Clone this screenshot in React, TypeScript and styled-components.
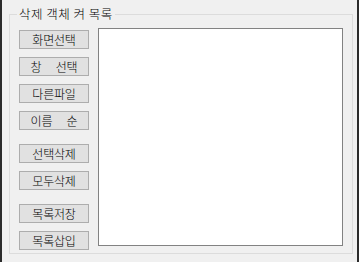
import React from "react";
import styled, { createGlobalStyle } from "styled-components";

const Global = createGlobalStyle`
  html, body { margin: 0; padding: 0; background: #f0f0f0; }
  body { font-family: "Noto Sans CJK KR", "Noto Sans", sans-serif; }
`;

const Window = styled.div`
  width: 359px;
  height: 262px;
  display: flex;
  background: #f0f0f0;
  overflow: hidden;
`;

const EdgeStrip = styled.div<{ $w: number }>`
  width: ${(p) => p.$w}px;
  background: #2b2b2b;
  flex-shrink: 0;
`;

const Content = styled.div`
  flex: 1;
  padding: 14px 0 0 7px;
`;

const GroupBox = styled.div`
  position: relative;
  width: 344px;
  height: 240px;
  box-sizing: border-box;
  border: 1px solid #dcdcdc;
  padding: 13px 9px 0 9px;
  display: flex;
  gap: 9px;
`;

const Legend = styled.div`
  position: absolute;
  top: -9px;
  left: 7px;
  padding: 0 2px;
  background: #f0f0f0;
  font-size: 12.5px;
  font-weight: 300;
  letter-spacing: 0.5px;
  line-height: 16px;
  color: #000;
  white-space: pre;
`;

const ButtonColumn = styled.div`
  display: flex;
  flex-direction: column;
  padding-top: 2px;
`;

const Button = styled.button<{ $gap: number }>`
  width: 70px;
  height: 19px;
  margin-top: ${(p) => p.$gap}px;
  box-sizing: border-box;
  border: 1px solid #adadad;
  background: #e1e1e1;
  padding: 0;
  font-family: "Noto Sans CJK KR", "Noto Sans", sans-serif;
  font-size: 12px;
  font-weight: 300;
  letter-spacing: -0.2px;
  line-height: 16px;
  color: #000;
  white-space: pre;
  display: flex;
  align-items: center;
  justify-content: center;
`;

const ListBox = styled.div`
  width: 245px;
  height: 218px;
  box-sizing: border-box;
  border: 1px solid #828282;
  background: #fff;
`;

const buttons: { label: string; gap: number }[] = [
  { label: "화면선택", gap: 0 },
  { label: "창\u2003 선택", gap: 8 },
  { label: "다른파일", gap: 8 },
  { label: "이름\u2003 순", gap: 8 },
  { label: "선택삭제", gap: 14 },
  { label: "모두삭제", gap: 8 },
  { label: "목록저장", gap: 14 },
  { label: "목록삽입", gap: 8 },
];

export default function App() {
  return (
    <>
      <Global />
      <Window>
        <EdgeStrip $w={2} />
        <Content>
          <GroupBox>
            <Legend>삭제 객체 켜 목록</Legend>
            <ButtonColumn>
              {buttons.map((b) => (
                <Button key={b.label} $gap={b.gap}>
                  {b.label}
                </Button>
              ))}
            </ButtonColumn>
            <ListBox />
          </GroupBox>
        </Content>
        <EdgeStrip $w={2} />
      </Window>
    </>
  );
}
